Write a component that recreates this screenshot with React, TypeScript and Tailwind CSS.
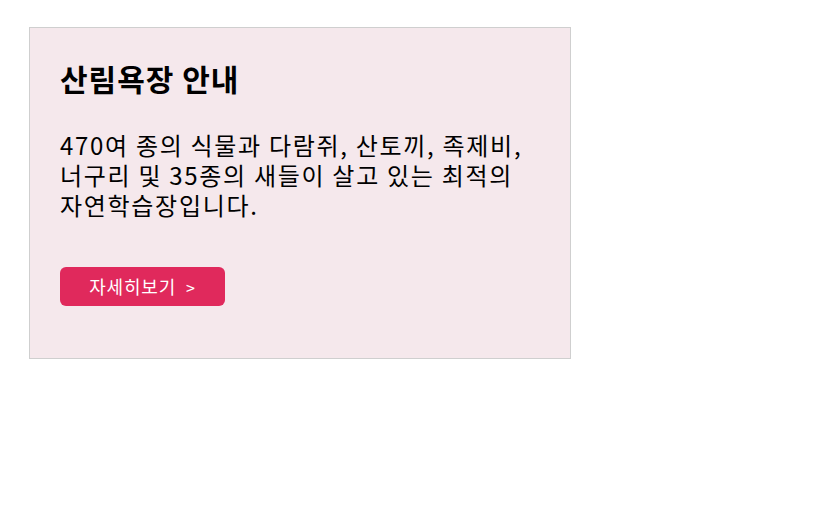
const lines = [
  "470여 종의 식물과 다람쥐, 산토끼, 족제비,",
  "너구리 및 35종의 새들이 살고 있는 최적의",
  "자연학습장입니다.",
];

export default function App() {
  return (
    <div className="min-h-screen bg-white pt-[27px] pl-[29px]" style={{ fontFamily: '"Noto Sans CJK KR", "Noto Sans", sans-serif' }}>
      <div className="w-[542px] h-[332px] border border-[#cfcfcf] bg-[#f5e8ec] px-[30px] pt-[30px]">
        <h2 className="text-[30px] font-bold leading-[40px] tracking-[1px] text-black">산림욕장 안내</h2>
        <div className="mt-[32px] text-[24px] tracking-[1.7px] text-black whitespace-nowrap">
          {lines.map((line) => (
            <p key={line} className="h-[30px] leading-[30px]">
              {line}
            </p>
          ))}
        </div>
        <button className="mt-[47px] flex h-[39px] w-[165px] items-center justify-center gap-[10px] rounded-[6px] bg-[#e0295c] text-[18px] tracking-[0.8px] text-white">
          <span>자세히보기</span>
          <span className="text-[16px]">&gt;</span>
        </button>
      </div>
    </div>
  );
}
